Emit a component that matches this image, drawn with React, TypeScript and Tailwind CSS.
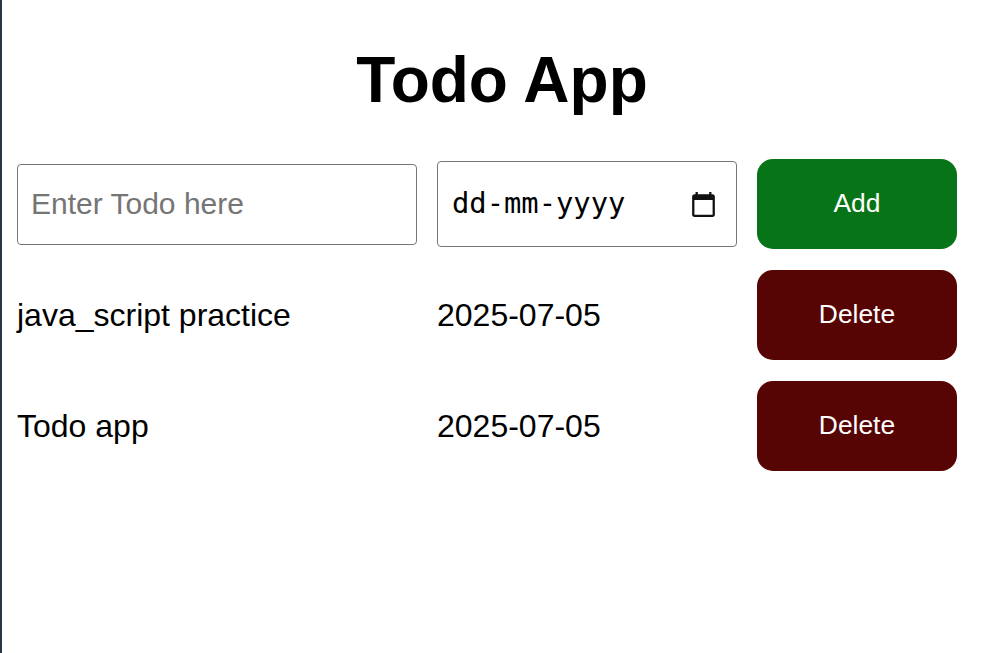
import { useState } from 'react';

type Todo = { id: number; name: string; dueDate: string };

export default function App() {
  const [todos, setTodos] = useState<Todo[]>([
    { id: 1, name: 'java_script practice', dueDate: '2025-07-05' },
    { id: 2, name: 'Todo app', dueDate: '2025-07-05' },
  ]);
  const [name, setName] = useState('');
  const [dueDate, setDueDate] = useState('');

  const handleAdd = () => {
    if (!name.trim()) return;
    setTodos(prev => [...prev, { id: Date.now(), name, dueDate }]);
    setName('');
    setDueDate('');
  };

  const handleDelete = (id: number) => {
    setTodos(prev => prev.filter(t => t.id !== id));
  };

  return (
    <div className="min-h-screen border-l-2 border-[#263646] bg-white font-['Liberation_Sans',Arial,sans-serif] text-black">
      <div className="pl-[15px] pr-[5px] pt-[48px]">
        <h1 className="text-center text-[64px] font-bold leading-none">Todo App</h1>

        <div className="mt-[47px] grid grid-cols-[400px_300px_200px] items-center gap-x-[20px] gap-y-[21px]">
          {/* Fila de entrada */}
          <input
            type="text"
            value={name}
            onChange={e => setName(e.target.value)}
            placeholder="Enter Todo here"
            className="h-[81px] w-full rounded-[4px] border border-[#767676] px-[13px] text-[30px] outline-none placeholder:text-[#757575]"
          />
          <label className="flex h-[86px] w-full items-center rounded-[4px] border border-[#767676] pl-[14px] pr-[21px]">
            <input
              type="text"
              value={dueDate}
              onChange={e => setDueDate(e.target.value)}
              placeholder="dd-mm-yyyy"
              className="min-w-0 flex-1 font-['DejaVu_Sans_Mono',monospace] text-[28.8px] text-black outline-none placeholder:text-black"
            />
            <svg width="23" height="25" viewBox="2 1 20 22" fill="#111">
              <path d="M20 3h-1V1h-2v2H7V1H5v2H4c-1.1 0-2 .9-2 2v16c0 1.1.9 2 2 2h16c1.1 0 2-.9 2-2V5c0-1.1-.9-2-2-2zm0 18H4V8h16v13z" />
            </svg>
          </label>
          <button
            onClick={handleAdd}
            className="h-[90px] w-full rounded-[16px] bg-[#077517] text-[26.4px] text-white"
          >
            Add
          </button>

          {todos.map(todo => (
            <div key={todo.id} className="contents">
              <div className="text-[32px]">{todo.name}</div>
              <div className="text-[32px]">{todo.dueDate}</div>
              <button
                onClick={() => handleDelete(todo.id)}
                className="h-[90px] w-full rounded-[16px] bg-[#560404] text-[26.4px] text-white"
              >
                Delete
              </button>
            </div>
          ))}
        </div>
      </div>
    </div>
  );
}
